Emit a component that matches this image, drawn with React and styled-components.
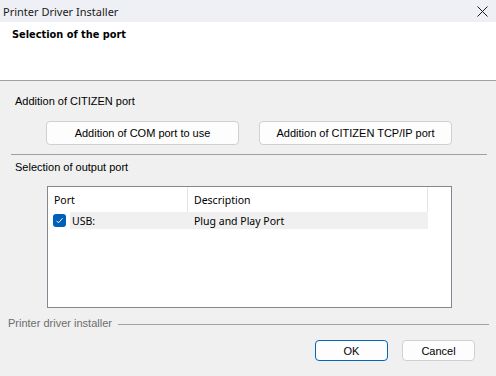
import React from "react";
import styled, { createGlobalStyle } from "styled-components";

const GlobalStyle = createGlobalStyle`
  html, body {
    margin: 0;
    padding: 0;
    background: #f0f0f0;
  }
  * {
    box-sizing: border-box;
  }
`;

const Window = styled.div`
  width: 496px;
  height: 376px;
  display: flex;
  flex-direction: column;
  background: #f0f0f0;
  font-family: "Liberation Sans", Arial, sans-serif;
  font-size: 11px;
  color: #000;
  overflow: hidden;
`;

const TitleBar = styled.div`
  height: 22px;
  display: flex;
  align-items: center;
  justify-content: space-between;
  padding: 0 6px 0 3px;
  background: #eff0f5;
  font-family: "Noto Sans", "Open Sans", sans-serif;
  font-size: 11px;
  color: #1a1a1a;
`;

const CloseButton = styled.div`
  width: 16px;
  height: 16px;
  display: flex;
  align-items: center;
  justify-content: center;
`;

const Header = styled.div`
  height: 59px;
  background: #fff;
  border-bottom: 1px solid #a0a0a0;
  padding: 6px 12px 0;
`;

const HeaderTitle = styled.div`
  font-family: "DejaVu Sans", Verdana, sans-serif;
  font-weight: bold;
  font-size: 9.8px;
  line-height: 14px;
`;

const Body = styled.div`
  flex: 1;
  display: flex;
  flex-direction: column;
  padding: 0 9px 0 11px;
`;

const Label = styled.div`
  line-height: 14px;
  margin-top: ${(p) => p.$top}px;
  padding-left: ${(p) => p.$indent || 4}px;
  color: ${(p) => (p.$muted ? "#6d6d6d" : "#000")};
`;

const ButtonRow = styled.div`
  display: flex;
  gap: ${(p) => p.$gap}px;
  margin-top: ${(p) => p.$top}px;
  padding-left: ${(p) => p.$left || 0}px;
  justify-content: ${(p) => (p.$end ? "flex-end" : "flex-start")};
  padding-right: ${(p) => p.$right || 0}px;
`;

const Button = styled.button`
  width: ${(p) => p.$w}px;
  height: ${(p) => p.$h}px;
  background: #fdfdfd;
  border: 1px solid ${(p) => (p.$default ? "#0067c0" : "#d0d0d0")};
  border-radius: 4px;
  font-family: "Liberation Sans", Arial, sans-serif;
  font-size: 11px;
  color: #000;
  padding: 0;
`;

const Separator = styled.div`
  height: 1px;
  background: #a0a0a0;
  margin-top: 9px;
  width: 476px;
`;

const ListBox = styled.div`
  margin-top: 12px;
  margin-left: 36px;
  width: 405px;
  height: 122px;
  background: #fff;
  border: 1px solid #828790;
`;

const ListGrid = styled.div`
  display: grid;
  grid-template-columns: 140px 240px;
`;

const HeadCell = styled.div`
  height: 25px;
  display: flex;
  align-items: center;
  padding-left: 6px;
  border-right: 1px solid #e5e5e5;
  font-family: "Noto Sans", "Open Sans", sans-serif;
  font-size: 10.5px;
`;

const Cell = styled.div`
  height: 17px;
  display: flex;
  align-items: center;
  gap: 4px;
  padding-left: ${(p) => p.$pad}px;
  font-family: "Noto Sans", "Open Sans", sans-serif;
  font-size: 10.5px;
`;

const Highlight = styled.span`
  flex: 1;
  align-self: stretch;
  display: flex;
  align-items: center;
  background: ${(p) => (p.$on ? "#f0f0f0" : "transparent")};
  padding-left: ${(p) => p.$pad || 0}px;
`;

const Check = styled.span`
  width: 13px;
  height: 13px;
  border-radius: 3px;
  background: #005fb8;
  display: flex;
  align-items: center;
  justify-content: center;
  flex-shrink: 0;
`;

const GroupFooter = styled.div`
  display: flex;
  align-items: center;
  gap: 6px;
  margin-top: 8px;
  margin-left: -3px;
  line-height: 14px;
  color: #6d6d6d;
`;

const GroupLine = styled.div`
  flex: 1;
  height: 1px;
  background: #a0a0a0;
  margin-top: 2px;
  margin-right: -2px;
`;

const rows = [{ port: "USB:", desc: "Plug and Play Port", checked: true }];

export default function App() {
  return (
    <>
      <GlobalStyle />
      <Window>
        <TitleBar>
          <span>Printer Driver Installer</span>
          <CloseButton>
            <svg width="11" height="11" viewBox="0 0 11 11">
              <path d="M0.5 0.5L10.5 10.5M10.5 0.5L0.5 10.5" stroke="#1a1a1a" strokeWidth="1" />
            </svg>
          </CloseButton>
        </TitleBar>
        <Header>
          <HeaderTitle>Selection of the port</HeaderTitle>
        </Header>
        <Body>
          <Label $top={13}>Addition of CITIZEN port</Label>
          <ButtonRow $top={13} $gap={20} $left={35}>
            <Button $w={193} $h={24}>Addition of COM port to use</Button>
            <Button $w={193} $h={24}>Addition of CITIZEN TCP/IP port</Button>
          </ButtonRow>
          <Separator />
          <Label $top={5}>Selection of output port</Label>
          <ListBox>
            <ListGrid>
              <HeadCell>Port</HeadCell>
              <HeadCell>Description</HeadCell>
              {rows.map((r) => (
                <React.Fragment key={r.port}>
                  <Cell $pad={5}>
                    <Check>
                      <svg width="9" height="9" viewBox="0 0 9 9">
                        <path d="M1.5 4.8L3.5 6.8L7.5 2.3" fill="none" stroke="#fff" strokeWidth="1" />
                      </svg>
                    </Check>
                    <Highlight $on={r.checked} $pad={2}>{r.port}</Highlight>
                  </Cell>
                  <Cell $pad={0}>
                    <Highlight $on={r.checked} $pad={6}>{r.desc}</Highlight>
                  </Cell>
                </React.Fragment>
              ))}
            </ListGrid>
          </ListBox>
          <GroupFooter>
            <span>Printer driver installer</span>
            <GroupLine />
          </GroupFooter>
          <ButtonRow $top={10} $gap={14} $end $right={12}>
            <Button $w={73} $h={21} $default>OK</Button>
            <Button $w={73} $h={21}>Cancel</Button>
          </ButtonRow>
        </Body>
      </Window>
    </>
  );
}
